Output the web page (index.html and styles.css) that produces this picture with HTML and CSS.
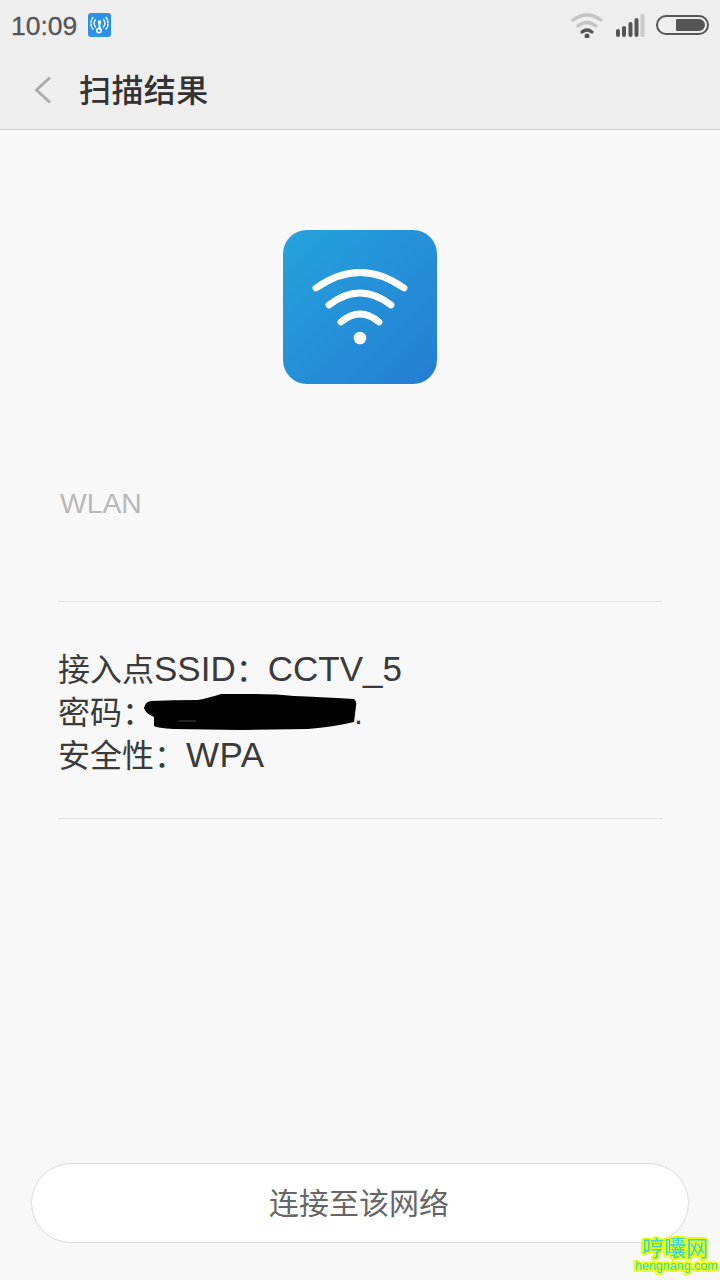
FILE: index.html
```html
<!DOCTYPE html>
<html lang="zh-CN">
<head>
<meta charset="utf-8">
<title>扫描结果</title>
<link rel="stylesheet" href="styles.css">
</head>
<body>
<div class="page">
  <header class="top">
    <div class="status">
      <div class="status-left">
        <span class="clock">10:09</span>
        <svg class="hotspot" width="23" height="24" viewBox="0 0 23 24">
          <rect width="23" height="24" rx="3" fill="#2a90e8"/>
          <g fill="none" stroke="#fff" stroke-linecap="round">
            <path d="M7.5 6.5a6 6 0 0 0 0 7.5M15.5 6.5a6 6 0 0 1 0 7.500" stroke-width="1.400"/>
            <path d="M5 4.500a9 9 0 0 0 0 11.500M18 4.500a9 9 0 0 1 0 11.500" stroke-width="1.400" stroke-dasharray="2 1.500"/>
            <path d="M11.500 10v6" stroke-width="2"/>
            <circle cx="11" cy="17.500" r="2.200" stroke-width="1.500"/>
          </g>
          <circle cx="11.500" cy="9" r="1.800" fill="#fff"/>
        </svg>
      </div>
      <div class="status-right">
        <svg class="wifi" width="34" height="26" viewBox="0 0 34 26">
          <g fill="none" stroke-linecap="round" stroke-width="3.200">
            <path d="M3 8Q17 -2 31 8" stroke="#c4c4c4"/>
            <path d="M8 14Q17 7 26 14" stroke="#c4c4c4"/>
            <path d="M12 20Q17 16 22 20" stroke="#555"/>
          </g>
          <circle cx="17" cy="24" r="2.500" fill="#555"/>
        </svg>
        <svg class="signal" width="29" height="23" viewBox="0 0 29 23">
          <rect x="0" y="15" width="4" height="8" rx="2" fill="#555"/>
          <rect x="6" y="12" width="4" height="11" rx="2" fill="#555"/>
          <rect x="12.500" y="8" width="4" height="15" rx="2" fill="#555"/>
          <rect x="18.500" y="4" width="4" height="19" rx="2" fill="#555"/>
          <rect x="24.500" y="0" width="4" height="23" rx="1" fill="#c8c8c8"/>
        </svg>
        <div class="battery"><div class="battery-fill"></div></div>
      </div>
    </div>
    <div class="nav">
      <svg class="back" width="18" height="28" viewBox="0 0 18 28">
        <path d="M16 1.500L2.500 14 16 26.500" fill="none" stroke="#aaa" stroke-width="2.800"/>
      </svg>
      <h1 class="title">扫描结果</h1>
    </div>
  </header>

  <main class="content">
    <div class="app-icon">
      <svg width="154" height="154" viewBox="0 0 154 154">
        <defs>
          <linearGradient id="tile" x1="0" y1="0" x2="1" y2="1">
            <stop offset="0" stop-color="#25a3dc"/>
            <stop offset="1" stop-color="#247dd3"/>
          </linearGradient>
        </defs>
        <rect width="154" height="154" rx="24" fill="url(#tile)"/>
        <g fill="none" stroke="#fff" stroke-width="6.800" stroke-linecap="round">
          <path d="M33 58Q77 27 121 58"/>
          <path d="M46 75Q77 51 108 75"/>
          <path d="M58 92Q77 76 96 92"/>
        </g>
        <circle cx="77" cy="108" r="6.300" fill="#fff"/>
      </svg>
    </div>

    <div class="label">WLAN</div>

    <div class="info">
      <div class="line">接入点<span class="latin">SSID</span>：<span class="latin">CCTV_5</span></div>
      <div class="line">密码：<span class="secret"><svg class="blob" width="216" height="38" viewBox="0 0 216 38"><path d="M1 14Q2 8 8 7Q30 6 55 6Q65 4 78 0L112 0Q135 0 151 2Q175 3 211 5Q214 7 213 12L211 28Q190 33 165 35L98 36L31 35Q14 34 11 32L11 23Q3 20 1 14Z" fill="#000"/><path d="M35 27H53" stroke="#444" stroke-width="1"/></svg></span>.</div>
      <div class="line">安全性：<span class="latin wide">WPA</span></div>
    </div>

    <button class="connect" type="button">连接至该网络</button>
  </main>

  <div class="watermark">
    <div class="wm-cn">哼囔网</div>
    <div class="wm-en">hengnang.com</div>
  </div>
</div>
</body>
</html>
```
FILE: styles.css
```css
* { box-sizing: border-box; }
html, body { margin: 0; padding: 0; }
body {
  background: #f8f8f8;
  font-family: "Liberation Sans", "Noto Sans CJK SC", sans-serif;
}
.page {
  position: relative;
  width: 720px;
  height: 1280px;
  display: flex;
  flex-direction: column;
  overflow: hidden;
}
.top {
  height: 130px;
  background: #eeeeee;
  border-bottom: 1px solid #cfcfcf;
  flex: none;
}
.status {
  height: 50px;
  display: flex;
  align-items: flex-start;
  justify-content: space-between;
  padding: 12px 11px 0 11px;
}
.status-left {
  display: flex;
  align-items: center;
  gap: 10.500px;
}
.clock {
  font-size: 26.500px;
  line-height: 28px;
  color: #555;
  -webkit-text-stroke: 0.3px #555;
}
.hotspot { display: block; margin-top: -2px; }
.status-right {
  display: flex;
  align-items: flex-start;
}
.wifi { display: block; margin-right: 12px; }
.signal { display: block; margin-top: 2px; margin-right: 11px; }
.battery {
  width: 53px;
  height: 20px;
  margin-top: 3px;
  border: 2px solid #555;
  border-radius: 10px;
  padding: 2px;
  display: flex;
  justify-content: flex-end;
}
.battery-fill {
  width: 29px;
  height: 12px;
  background: #555;
  border-radius: 1px 6px 6px 1px;
}
.nav {
  height: 79px;
  display: flex;
  align-items: center;
  padding-left: 34px;
}
.back { display: block; flex: none; }
.title {
  margin: 3px 0 0 27px;
  font-size: 32px;
  line-height: 44px;
  font-weight: 500;
  letter-spacing: 0.4px;
  color: #333;
}
.content {
  flex: 1;
  display: flex;
  flex-direction: column;
  padding: 0 31px 37px;
}
.app-icon {
  align-self: center;
  width: 154px;
  height: 154px;
  margin-top: 100px;
}
.app-icon svg { display: block; }
.label {
  margin: 101px 27px 0 27px;
  padding: 0 0 80px 2px;
  border-bottom: 1px solid #e0e0e0;
  font-size: 28.300px;
  line-height: 36px;
  color: #b8b8b8;
}
.info {
  margin: 47px 26px 0 27px;
  padding-bottom: 40px;
  border-bottom: 1px solid #e0e0e0;
}
.line {
  font-size: 32px;
  line-height: 43px;
  color: #3a3a3a;
  white-space: nowrap;
}
.latin {
  font-size: 35px;
  line-height: 1;
}
.wide { letter-spacing: 0.5px; }
.secret {
  position: relative;
  display: inline-block;
  width: 200px;
  height: 1px;
}
.blob {
  position: absolute;
  left: -11px;
  top: -29px;
}
.connect {
  margin-top: auto;
  width: 658px;
  height: 80px;
  background: #fff;
  border: 1px solid #dcdcdc;
  border-radius: 40px;
  font-family: inherit;
  font-size: 30px;
  line-height: 76px;
  color: #666;
  padding: 2px 2px 0 0;
}
.watermark {
  position: absolute;
  right: 5px;
  bottom: 6px;
  width: 80px;
  text-align: center;
  color: #3ed6cf;
  text-shadow: 2px 0 0 #e8ff00, -2px 0 0 #e8ff00, 0 2px 0 #e8ff00, 0 -2px 0 #e8ff00, 1.500px 1.500px 0 #e8ff00, -1.500px 1.500px 0 #e8ff00, 1.500px -1.500px 0 #e8ff00, -1.500px -1.500px 0 #e8ff00;
}
.wm-cn {
  font-size: 22px;
  line-height: 24px;
  margin-bottom: 1px;
  font-family: "Noto Sans CJK SC", sans-serif;
}
.wm-en {
  font-size: 12.500px;
  line-height: 15px;
  white-space: nowrap;
}
```
